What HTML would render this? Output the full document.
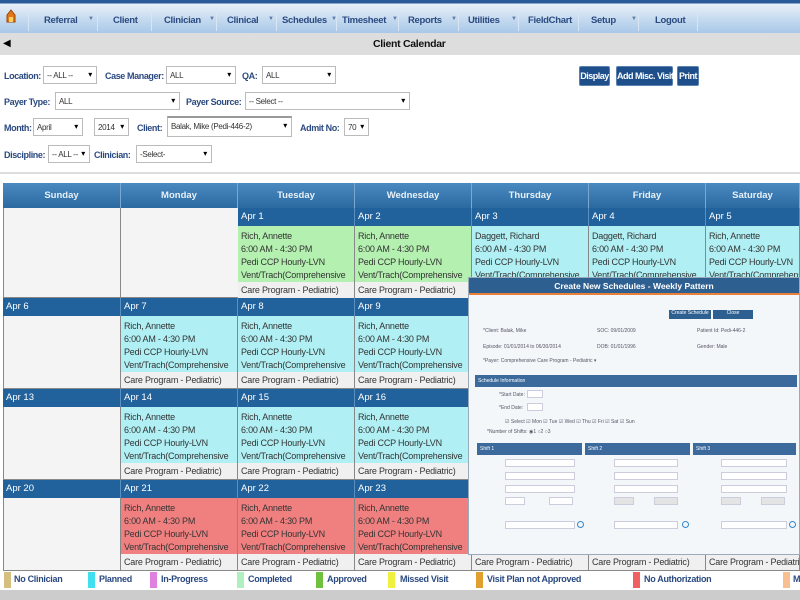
<!DOCTYPE html>
<html><head><meta charset="utf-8"><style>
*{margin:0;padding:0;box-sizing:border-box}
body{width:800px;height:600px;overflow:hidden;background:#fff;font-family:"Liberation Sans",sans-serif;font-size:10px;color:#333;position:relative}
.a{position:absolute}
.nav{left:0;top:0;width:800px;height:33px;background:linear-gradient(#2a5a9a 0,#2a5a9a 3px,#e8f0f8 4px,#c8dcf0 18px,#a8c8e8 33px)}
.ni{position:absolute;top:15px;font-weight:bold;color:#2a4a80;font-size:9.5px;letter-spacing:-0.3px;white-space:nowrap}
.ns{position:absolute;top:9px;width:1px;height:22px;background:#d8e6f4}
.dd{position:absolute;top:16px;font-size:6px;color:#5a7aa8}
.tbar{left:0;top:33px;width:800px;height:22px;background:#ddd}
.lbl{position:absolute;font-weight:bold;color:#2a4a80;font-size:9px;letter-spacing:-0.4px;white-space:nowrap}
.sel{position:absolute;height:18px;border:1px solid #bbb;background:#fff;font-size:8px;padding:4px 3px;color:#333;letter-spacing:-0.3px;white-space:nowrap;overflow:hidden}
.sel:after{content:"▾";position:absolute;right:4px;top:3px;font-size:8px;color:#000}
.btn{position:absolute;top:66px;height:20px;background:#1e4f8a;color:#fff;font-weight:bold;font-size:9px;letter-spacing:-0.5px;border-radius:2px;padding:4px 0;border:1px solid #5a80b0;text-align:center;white-space:nowrap}
.hd{position:absolute;top:183px;height:25px;background:linear-gradient(#4a8ac0,#2a6aa0);color:#e8f0f8;font-weight:bold;font-size:9.5px;text-align:center;padding-top:7px;border-right:1px solid #7aa8d0}
.dh{position:absolute;height:18px;background:#22629c;color:#fff;font-size:9.5px;padding:3px 3px;border-right:1px solid #5a90c0}
.ev{position:absolute;font-size:9px;letter-spacing:-0.2px;line-height:13px;padding:4px 3px 0;color:#333;border-right:1px solid #888;overflow:hidden;white-space:nowrap}
.ev .last{position:absolute;left:0;right:0;top:56px;height:17px;background:#f0f0f0;padding:2px 3px}
.g{background:#b4f0b0}.c{background:#b0f0f4}.r{background:#f08080}
.leg{position:absolute;top:574px;height:15px;font-size:9px;letter-spacing:-0.3px;color:#2a4a80;font-weight:bold;white-space:nowrap}
.sw{position:absolute;top:572px;width:7px;height:16px}
.dlg{left:468px;top:277px;width:332px;height:278px;background:#f4f7fa;border:1px solid #9ab}
.dt{position:absolute;left:0;top:0;width:100%;height:17px;background:#2e5f91;color:#fff;font-size:8.5px;font-weight:bold;text-align:center;padding-top:3px;border-bottom:2px solid #e8803a}
.sm{position:absolute;font-size:5px;color:#556;white-space:nowrap}
.bar{position:absolute;height:12px;background:#3c6a9c;color:#fff;font-size:5px;padding:3px 3px}
.in{position:absolute;height:8px;background:#fff;border:1px solid #ccd}
.in2{position:absolute;height:8px;background:#e4e4e4;border:1px solid #ccd}
</style></head><body>
<div class="a nav"></div>
<div class="a" style="left:6px;top:9px;width:10px;height:14px;"><svg width="10" height="14"><path d="M5 1 L1 6 L1 13 L9 13 L9 6 Z" fill="#e07818" stroke="#a04008"/><rect x="3" y="8" width="4" height="5" fill="#fbd060"/></svg></div>
<div class="ns" style="left:28px"></div>
<div class="ni" style="left:44px">Referral</div><div class="dd" style="left:88px">▼</div><div class="ns" style="left:97px"></div>
<div class="ni" style="left:113px">Client</div><div class="ns" style="left:151px"></div>
<div class="ni" style="left:164px">Clinician</div><div class="dd" style="left:209px">▼</div><div class="ns" style="left:216px"></div>
<div class="ni" style="left:227px">Clinical</div><div class="dd" style="left:268px">▼</div><div class="ns" style="left:276px"></div>
<div class="ni" style="left:282px">Schedules</div><div class="dd" style="left:331px">▼</div><div class="ns" style="left:336px"></div>
<div class="ni" style="left:342px">Timesheet</div><div class="dd" style="left:392px">▼</div><div class="ns" style="left:398px"></div>
<div class="ni" style="left:408px">Reports</div><div class="dd" style="left:451px">▼</div><div class="ns" style="left:458px"></div>
<div class="ni" style="left:468px">Utilities</div><div class="dd" style="left:511px">▼</div><div class="ns" style="left:518px"></div>
<div class="ni" style="left:528px">FieldChart</div><div class="ns" style="left:578px"></div>
<div class="ni" style="left:591px">Setup</div><div class="dd" style="left:631px">▼</div><div class="ns" style="left:638px"></div>
<div class="ni" style="left:655px">Logout</div><div class="ns" style="left:697px"></div>
<div class="a tbar"></div>
<div class="a" style="left:3px;top:38px;font-size:10px;color:#000">◀</div>
<div class="a" style="left:373px;top:38px;font-weight:bold;font-size:10.5px;letter-spacing:-0.3px;color:#111">Client Calendar</div>

<div class="lbl" style="left:4px;top:71px">Location:</div><div class="sel" style="left:43px;top:66px;width:54px">-- ALL --</div>
<div class="lbl" style="left:105px;top:71px">Case Manager:</div><div class="sel" style="left:166px;top:66px;width:70px">ALL</div>
<div class="lbl" style="left:242px;top:71px">QA:</div><div class="sel" style="left:262px;top:66px;width:74px">ALL</div>
<div class="btn" style="left:579px;width:31px">Display</div>
<div class="btn" style="left:616px;width:57px">Add Misc. Visit</div>
<div class="btn" style="left:677px;width:22px">Print</div>
<div class="lbl" style="left:4px;top:97px">Payer Type:</div><div class="sel" style="left:55px;top:92px;width:125px">ALL</div>
<div class="lbl" style="left:186px;top:97px">Payer Source:</div><div class="sel" style="left:245px;top:92px;width:165px">-- Select --</div>
<div class="lbl" style="left:4px;top:123px">Month:</div><div class="sel" style="left:33px;top:118px;width:50px">April</div>
<div class="sel" style="left:94px;top:118px;width:35px">2014</div>
<div class="lbl" style="left:137px;top:123px">Client:</div><div class="sel" style="left:167px;top:116px;width:125px;height:21px;border-top:2px solid #999">Balak, Mike (Pedi-446-2)</div>
<div class="lbl" style="left:300px;top:123px">Admit No:</div><div class="sel" style="left:344px;top:118px;width:25px">70</div>
<div class="lbl" style="left:4px;top:150px">Discipline:</div><div class="sel" style="left:48px;top:145px;width:42px">-- ALL --</div>
<div class="lbl" style="left:94px;top:150px">Clinician:</div><div class="sel" style="left:136px;top:145px;width:76px">-Select-</div>
<div class="a" style="left:0;top:172px;width:800px;height:2px;background:#ddd"></div>

<div class="a" style="left:3px;top:183px;width:797px;height:388px;background:#f4f4f4;border-left:1px solid #888"></div>
<div class="hd" style="left:3px;width:118px">Sunday</div>
<div class="hd" style="left:121px;width:117px">Monday</div>
<div class="hd" style="left:238px;width:117px">Tuesday</div>
<div class="hd" style="left:355px;width:117px">Wednesday</div>
<div class="hd" style="left:472px;width:117px">Thursday</div>
<div class="hd" style="left:589px;width:117px">Friday</div>
<div class="hd" style="left:706px;width:94px">Saturday</div>

<div class="a" style="left:120px;top:208px;width:1px;height:363px;background:#888"></div>
<div class="a" style="left:3px;top:297px;width:797px;height:1px;background:#888"></div>
<div class="a" style="left:3px;top:388px;width:797px;height:1px;background:#888"></div>
<div class="a" style="left:3px;top:479px;width:797px;height:1px;background:#888"></div>
<div class="a" style="left:3px;top:570px;width:797px;height:1px;background:#888"></div>

<div class="dh" style="left:238px;top:208px;width:117px">Apr 1</div>
<div class="dh" style="left:355px;top:208px;width:117px">Apr 2</div>
<div class="dh" style="left:472px;top:208px;width:117px">Apr 3</div>
<div class="dh" style="left:589px;top:208px;width:117px">Apr 4</div>
<div class="dh" style="left:706px;top:208px;width:94px">Apr 5</div>
<div class="ev g" style="left:238px;top:226px;width:117px;height:72px">Rich, Annette<br>6:00 AM - 4:30 PM<br>Pedi CCP Hourly-LVN<br>Vent/Trach(Comprehensive<div class="last">Care Program - Pediatric)</div></div>
<div class="ev g" style="left:355px;top:226px;width:117px;height:72px">Rich, Annette<br>6:00 AM - 4:30 PM<br>Pedi CCP Hourly-LVN<br>Vent/Trach(Comprehensive<div class="last">Care Program - Pediatric)</div></div>
<div class="ev c" style="left:472px;top:226px;width:117px;height:72px">Daggett, Richard<br>6:00 AM - 4:30 PM<br>Pedi CCP Hourly-LVN<br>Vent/Trach(Comprehensive<div class="last">Care Program - Pediatric)</div></div>
<div class="ev c" style="left:589px;top:226px;width:117px;height:72px">Daggett, Richard<br>6:00 AM - 4:30 PM<br>Pedi CCP Hourly-LVN<br>Vent/Trach(Comprehensive<div class="last">Care Program - Pediatric)</div></div>
<div class="ev c" style="left:706px;top:226px;width:94px;height:72px">Rich, Annette<br>6:00 AM - 4:30 PM<br>Pedi CCP Hourly-LVN<br>Vent/Trach(Comprehensive<div class="last">Care Program - Pediatric)</div></div>

<div class="dh" style="left:3px;top:298px;width:118px">Apr 6</div>
<div class="dh" style="left:121px;top:298px;width:117px">Apr 7</div>
<div class="dh" style="left:238px;top:298px;width:117px">Apr 8</div>
<div class="dh" style="left:355px;top:298px;width:117px">Apr 9</div>
<div class="dh" style="left:472px;top:298px;width:328px">Apr 10</div>
<div class="ev c" style="left:121px;top:316px;width:117px;height:72px">Rich, Annette<br>6:00 AM - 4:30 PM<br>Pedi CCP Hourly-LVN<br>Vent/Trach(Comprehensive<div class="last">Care Program - Pediatric)</div></div>
<div class="ev c" style="left:238px;top:316px;width:117px;height:72px">Rich, Annette<br>6:00 AM - 4:30 PM<br>Pedi CCP Hourly-LVN<br>Vent/Trach(Comprehensive<div class="last">Care Program - Pediatric)</div></div>
<div class="ev c" style="left:355px;top:316px;width:117px;height:72px">Rich, Annette<br>6:00 AM - 4:30 PM<br>Pedi CCP Hourly-LVN<br>Vent/Trach(Comprehensive<div class="last">Care Program - Pediatric)</div></div>

<div class="dh" style="left:3px;top:389px;width:118px">Apr 13</div>
<div class="dh" style="left:121px;top:389px;width:117px">Apr 14</div>
<div class="dh" style="left:238px;top:389px;width:117px">Apr 15</div>
<div class="dh" style="left:355px;top:389px;width:117px">Apr 16</div>
<div class="ev c" style="left:121px;top:407px;width:117px;height:72px">Rich, Annette<br>6:00 AM - 4:30 PM<br>Pedi CCP Hourly-LVN<br>Vent/Trach(Comprehensive<div class="last">Care Program - Pediatric)</div></div>
<div class="ev c" style="left:238px;top:407px;width:117px;height:72px">Rich, Annette<br>6:00 AM - 4:30 PM<br>Pedi CCP Hourly-LVN<br>Vent/Trach(Comprehensive<div class="last">Care Program - Pediatric)</div></div>
<div class="ev c" style="left:355px;top:407px;width:117px;height:72px">Rich, Annette<br>6:00 AM - 4:30 PM<br>Pedi CCP Hourly-LVN<br>Vent/Trach(Comprehensive<div class="last">Care Program - Pediatric)</div></div>

<div class="dh" style="left:3px;top:480px;width:118px">Apr 20</div>
<div class="dh" style="left:121px;top:480px;width:117px">Apr 21</div>
<div class="dh" style="left:238px;top:480px;width:117px">Apr 22</div>
<div class="dh" style="left:355px;top:480px;width:117px">Apr 23</div>
<div class="ev r" style="left:121px;top:498px;width:117px;height:72px">Rich, Annette<br>6:00 AM - 4:30 PM<br>Pedi CCP Hourly-LVN<br>Vent/Trach(Comprehensive<div class="last">Care Program - Pediatric)</div></div>
<div class="ev r" style="left:238px;top:498px;width:117px;height:72px">Rich, Annette<br>6:00 AM - 4:30 PM<br>Pedi CCP Hourly-LVN<br>Vent/Trach(Comprehensive<div class="last">Care Program - Pediatric)</div></div>
<div class="ev r" style="left:355px;top:498px;width:117px;height:72px">Rich, Annette<br>6:00 AM - 4:30 PM<br>Pedi CCP Hourly-LVN<br>Vent/Trach(Comprehensive<div class="last">Care Program - Pediatric)</div></div>
<div class="ev r" style="left:472px;top:498px;width:117px;height:72px">Rich, Annette<br>6:00 AM - 4:30 PM<br>Pedi CCP Hourly-LVN<br>Vent/Trach(Comprehensive<div class="last">Care Program - Pediatric)</div></div>
<div class="ev r" style="left:589px;top:498px;width:117px;height:72px">Rich, Annette<br>6:00 AM - 4:30 PM<br>Pedi CCP Hourly-LVN<br>Vent/Trach(Comprehensive<div class="last">Care Program - Pediatric)</div></div>
<div class="ev r" style="left:706px;top:498px;width:94px;height:72px">Rich, Annette<br>6:00 AM - 4:30 PM<br>Pedi CCP Hourly-LVN<br>Vent/Trach(Comprehensive<div class="last">Care Program - Pediatric)</div></div>

<div class="a dlg">
<div class="dt">Create New Schedules - Weekly Pattern</div>
<div class="a" style="left:200px;top:32px;width:42px;height:9px;background:#2e5f91;color:#fff;font-size:5px;text-align:center">Create Schedule</div>
<div class="a" style="left:244px;top:32px;width:40px;height:9px;background:#2e5f91;color:#fff;font-size:5px;text-align:center">Close</div>
<div class="sm" style="left:14px;top:50px">*Client: Balak, Mike</div>
<div class="sm" style="left:128px;top:50px">SOC: 09/01/2009</div>
<div class="sm" style="left:228px;top:50px">Patient Id: Pedi-446-2</div>
<div class="sm" style="left:14px;top:66px">Episode: 01/01/2014 to 06/30/2014</div>
<div class="sm" style="left:128px;top:66px">DOB: 01/01/1996</div>
<div class="sm" style="left:228px;top:66px">Gender: Male</div>
<div class="sm" style="left:14px;top:80px">*Payer: Comprehensive Care Program - Pediatric ▾</div>
<div class="bar" style="left:6px;top:97px;width:322px">Schedule Information</div>
<div class="sm" style="left:30px;top:114px">*Start Date:</div><div class="in" style="left:58px;top:112px;width:16px"></div>
<div class="sm" style="left:30px;top:127px">*End Date:</div><div class="in" style="left:58px;top:125px;width:16px"></div>
<div class="sm" style="left:36px;top:141px">☑ Select ☑ Mon ☑ Tue ☑ Wed ☑ Thu ☑ Fri ☑ Sat ☑ Sun</div>
<div class="sm" style="left:18px;top:151px">*Number of Shifts: ◉1 ○2 ○3</div>
<div class="bar" style="left:8px;top:165px;width:105px">Shift 1</div>
<div class="bar" style="left:116px;top:165px;width:105px">Shift 2</div>
<div class="bar" style="left:224px;top:165px;width:103px">Shift 3</div>
<div class="in" style="left:36px;top:181px;width:70px"></div><div class="in" style="left:145px;top:181px;width:64px"></div><div class="in" style="left:252px;top:181px;width:66px"></div>
<div class="in" style="left:36px;top:194px;width:70px"></div><div class="in" style="left:145px;top:194px;width:64px"></div><div class="in" style="left:252px;top:194px;width:66px"></div>
<div class="in" style="left:36px;top:207px;width:70px"></div><div class="in" style="left:145px;top:207px;width:64px"></div><div class="in" style="left:252px;top:207px;width:66px"></div>
<div class="in" style="left:36px;top:219px;width:20px"></div><div class="in" style="left:80px;top:219px;width:24px"></div>
<div class="in2" style="left:145px;top:219px;width:20px"></div><div class="in2" style="left:185px;top:219px;width:24px"></div>
<div class="in2" style="left:252px;top:219px;width:20px"></div><div class="in2" style="left:292px;top:219px;width:24px"></div>
<div class="in" style="left:36px;top:243px;width:70px"></div><div class="in" style="left:145px;top:243px;width:64px"></div><div class="in" style="left:252px;top:243px;width:66px"></div>
<div class="a" style="left:108px;top:243px;width:7px;height:7px;border-radius:50%;border:1px solid #38c"></div>
<div class="a" style="left:213px;top:243px;width:7px;height:7px;border-radius:50%;border:1px solid #38c"></div>
<div class="a" style="left:320px;top:243px;width:7px;height:7px;border-radius:50%;border:1px solid #38c"></div>
</div>

<div class="a" style="left:0;top:571px;width:800px;height:19px;background:#fff"></div>
<div class="sw" style="left:4px;background:#d4bf80"></div><div class="leg" style="left:14px">No Clinician</div>
<div class="sw" style="left:88px;background:#40e0f0"></div><div class="leg" style="left:99px">Planned</div>
<div class="sw" style="left:150px;background:#e080e0"></div><div class="leg" style="left:161px">In-Progress</div>
<div class="sw" style="left:237px;background:#b0f0c0"></div><div class="leg" style="left:248px">Completed</div>
<div class="sw" style="left:316px;background:#70c040"></div><div class="leg" style="left:327px">Approved</div>
<div class="sw" style="left:388px;background:#f0f040"></div><div class="leg" style="left:400px">Missed Visit</div>
<div class="sw" style="left:476px;background:#e0a030"></div><div class="leg" style="left:487px">Visit Plan not Approved</div>
<div class="sw" style="left:633px;background:#f06060"></div><div class="leg" style="left:644px">No Authorization</div>
<div class="sw" style="left:783px;background:#f8c090"></div><div class="leg" style="left:793px">Misc. Visit</div>
<div class="a" style="left:0;top:590px;width:800px;height:10px;background:#ccc"></div>
</body></html>
